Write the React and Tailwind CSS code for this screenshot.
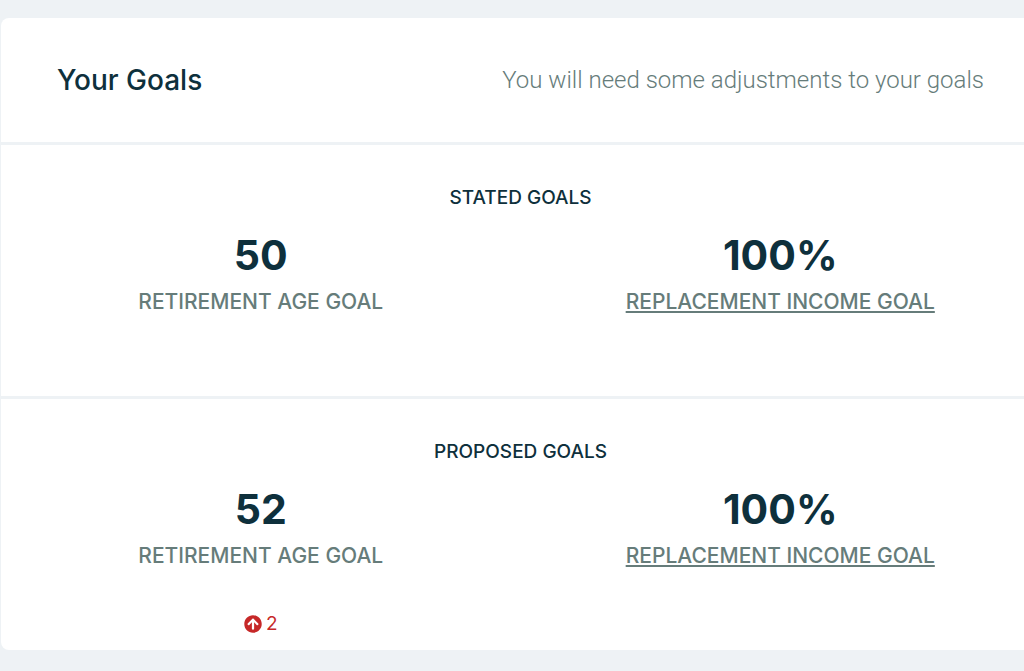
import { FaArrowCircleUp } from "react-icons/fa";

function Goal({ value, label, href, change }) {
  return (
    <div className="flex flex-col items-center">
      <dd className="text-[41px] leading-12 font-bold text-[#0e303c]">{value}</dd>
      <dt className="mt-[7px] text-[21px] leading-8 font-medium whitespace-nowrap text-[#667c7a]">
        {href ? (
          <a href={href} className="underline decoration-2 underline-offset-2">
            {label}
          </a>
        ) : (
          label
        )}
      </dt>
      <dd className="mt-10 flex min-h-6 items-center gap-1 text-[19px] leading-6 text-[#c62828]">
        {change && (
          <>
            <FaArrowCircleUp size={18} aria-hidden="true" />
            <span>{change}</span>
          </>
        )}
      </dd>
    </div>
  );
}

function GoalSection({ title, age, income, change }) {
  return (
    <section className="border-t-3 border-[#eef2f5] pt-10 pb-3.5">
      <h3 className="text-center text-[19px] leading-[26px] font-medium text-[#0e303c]">{title}</h3>
      <dl className="mt-5 grid grid-cols-2">
        <Goal value={age} label="RETIREMENT AGE GOAL" change={change} />
        <Goal value={income} label="REPLACEMENT INCOME GOAL" href="#income" />
      </dl>
    </section>
  );
}

export default function App() {
  return (
    <main className="min-h-screen overflow-hidden bg-[#eef2f5] pt-[18px] pl-px font-['Inter',sans-serif]">
      <article className="-mr-4 rounded-lg bg-white">
        <header className="flex items-center justify-between px-14 py-11">
          <h2 className="text-[28px] leading-9 font-medium text-[#0e303c]">Your Goals</h2>
          <p className="font-['Roboto',sans-serif] text-[24px] leading-9 font-light text-[#667c7a]">
            You will need some adjustments to your goals
          </p>
        </header>
        <GoalSection title="STATED GOALS" age="50" income="100%" />
        <GoalSection title="PROPOSED GOALS" age="52" income="100%" change="2" />
      </article>
    </main>
  );
}
